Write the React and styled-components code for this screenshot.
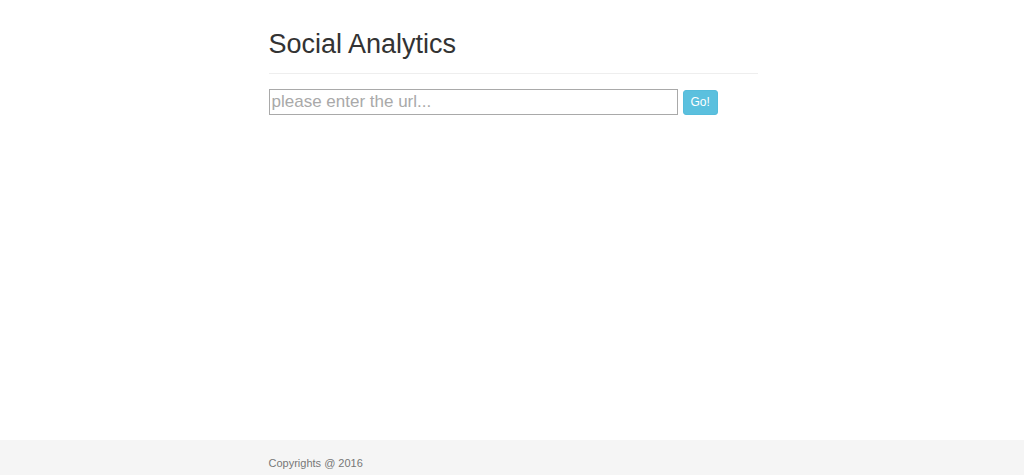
import React from 'react';
import styled, { createGlobalStyle } from 'styled-components';

const GlobalStyle = createGlobalStyle`
  html, body {
    margin: 0;
    padding: 0;
    height: 100%;
  }
  body {
    font-family: "Liberation Sans", Arial, sans-serif;
    color: #333;
    background: #fff;
  }
  #root {
    min-height: 100%;
    display: flex;
    flex-direction: column;
  }
`;

const Page = styled.div`
  flex: 1;
  display: flex;
  flex-direction: column;
  min-height: 475px;
`;

const Container = styled.div`
  width: 489px;
  margin: 0 auto;
  padding-left: 2px;
`;

const Main = styled(Container)`
  flex: 1;
`;

const Header = styled.div`
  padding-top: 29px;
  padding-bottom: 14px;
  border-bottom: 1px solid #eee;
`;

const Title = styled.h1`
  margin: 0;
  font-size: 27px;
  font-weight: 500;
  line-height: 30px;
  color: #333;
`;

const SearchForm = styled.form`
  display: flex;
  align-items: center;
  gap: 5px;
  margin-top: 15px;
`;

const UrlInput = styled.input`
  width: 409px;
  height: 26px;
  box-sizing: border-box;
  border: 1px solid #a9a9a9;
  padding: 0 2px;
  font-family: "Liberation Sans", Arial, sans-serif;
  font-size: 17px;
  color: #333;
  outline: none;

  &::placeholder {
    color: #a9a9a9;
  }
`;

const GoButton = styled.button`
  height: 25px;
  padding: 0 7px;
  border: 1px solid #55bcdb;
  border-radius: 3px;
  background: #5bc0de;
  color: #fff;
  font-family: "Liberation Sans", Arial, sans-serif;
  font-size: 12px;
  cursor: pointer;
`;

const Footer = styled.footer`
  height: 35px;
  background: #f5f5f5;
  display: flex;
  align-items: center;
`;

const FooterText = styled.p`
  margin: 0;
  padding-top: 10px;
  font-size: 11px;
  color: #777;
`;

export default function App() {
  return (
    <Page>
      <GlobalStyle />
      <Main>
        <Header>
          <Title>Social Analytics</Title>
        </Header>
        <SearchForm onSubmit={e => e.preventDefault()}>
          <UrlInput type="text" placeholder="please enter the url..." />
          <GoButton type="submit">Go!</GoButton>
        </SearchForm>
      </Main>
      <Footer>
        <Container>
          <FooterText>Copyrights @ 2016</FooterText>
        </Container>
      </Footer>
    </Page>
  );
}
